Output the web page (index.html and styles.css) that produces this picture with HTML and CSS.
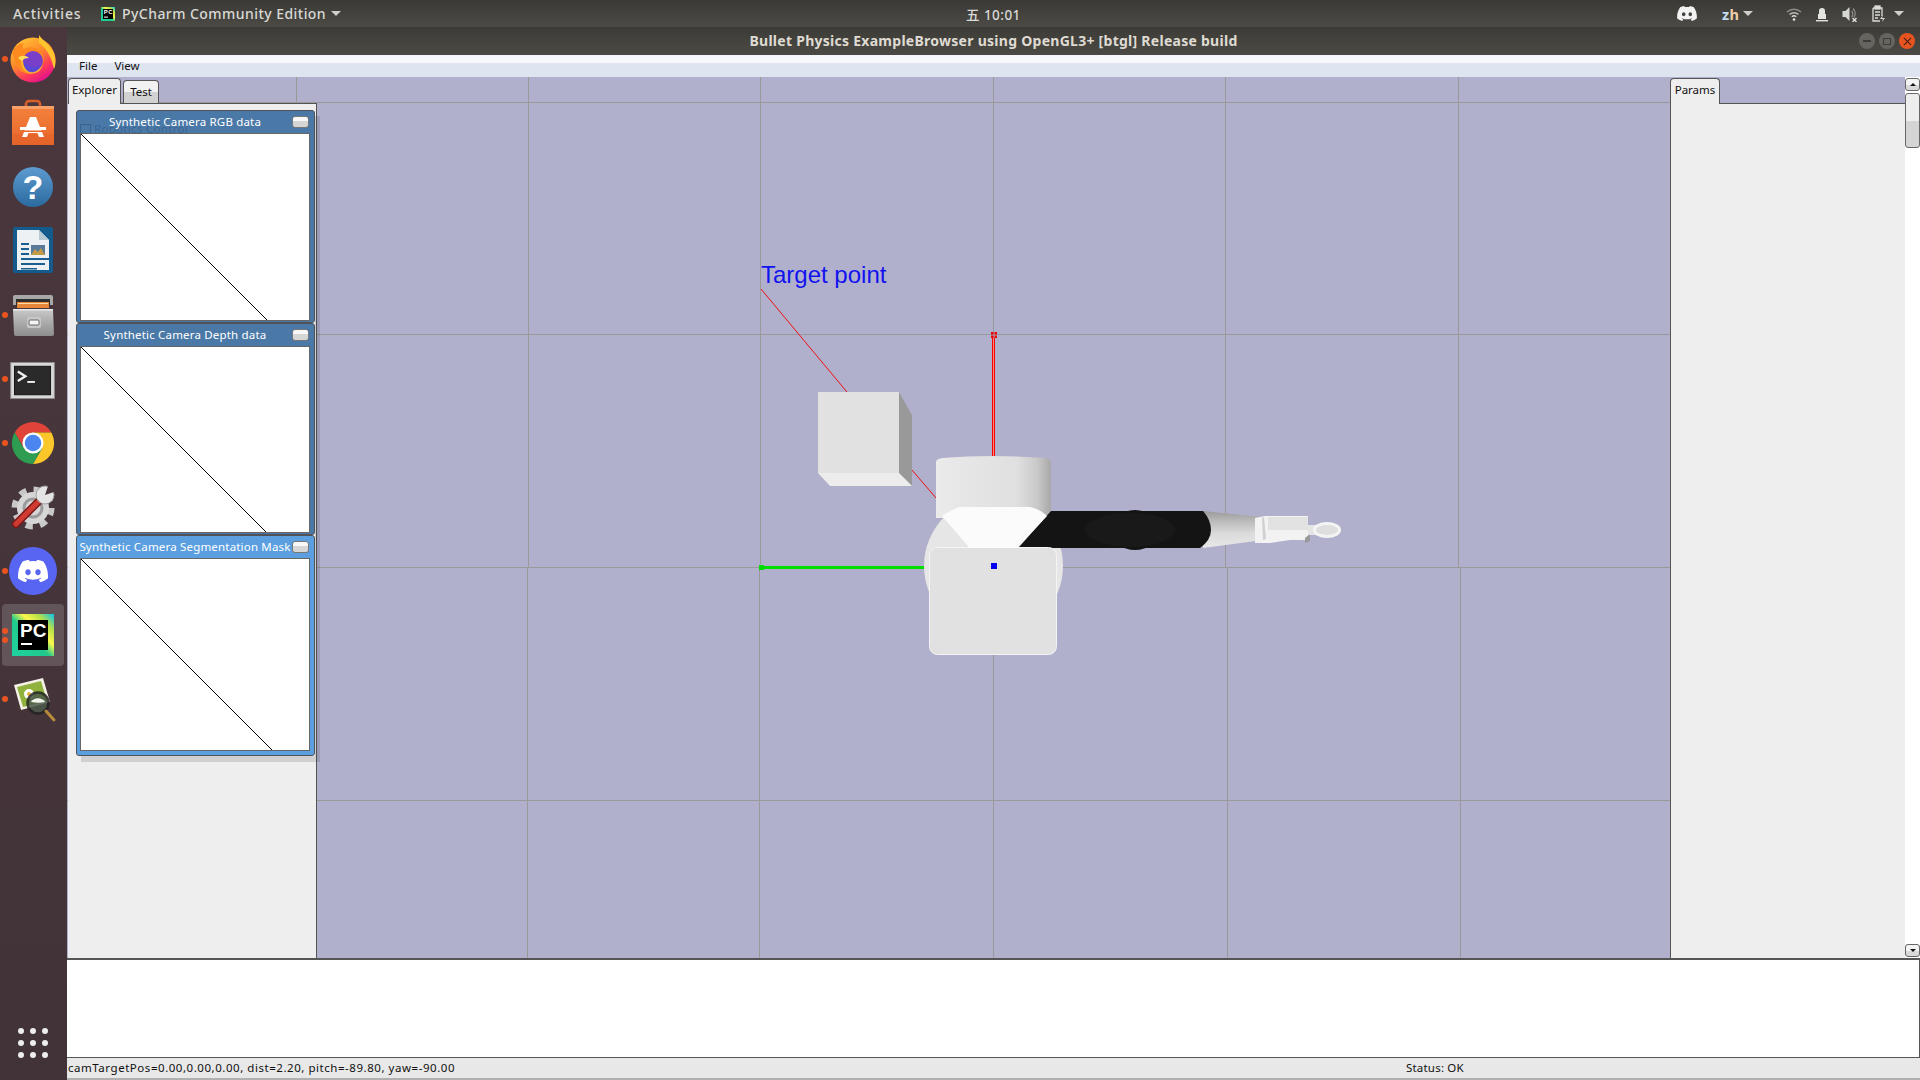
FILE: index.html
```html
<!DOCTYPE html>
<html lang="en">
<head>
<meta charset="utf-8">
<title>Bullet Physics ExampleBrowser</title>
<link rel="stylesheet" href="styles.css">
</head>
<body>
<svg class="defs" width="0" height="0" aria-hidden="true">
  <defs>
    <symbol id="discord" viewBox="0 0 127.14 96.36"><path d="M107.7,8.07A105.15,105.15,0,0,0,81.47,0a72.06,72.06,0,0,0-3.36,6.83A97.68,97.68,0,0,0,49,6.83,72.37,72.37,0,0,0,45.64,0,105.89,105.89,0,0,0,19.39,8.09C2.79,32.65-1.71,56.6.54,80.21h0A105.73,105.73,0,0,0,32.71,96.36,77.7,77.7,0,0,0,39.6,85.25a68.42,68.42,0,0,1-10.85-5.18c.91-.66,1.8-1.34,2.66-2a75.57,75.57,0,0,0,64.32,0c.87.71,1.76,1.39,2.66,2a68.68,68.68,0,0,1-10.87,5.19,77,77,0,0,0,6.89,11.1A105.25,105.25,0,0,0,126.6,80.22h0C129.24,52.84,122.09,29.11,107.7,8.07ZM42.45,65.69C36.18,65.69,31,60,31,53s5-12.74,11.43-12.74S54,46,53.89,53,48.84,65.69,42.45,65.69Zm42.24,0C78.41,65.69,73.25,60,73.25,53s5-12.74,11.44-12.74S96.23,46,96.12,53,91.08,65.69,84.69,65.69Z"/></symbol>
    <linearGradient id="pcg" x1="0" y1="1" x2="1" y2="0"><stop offset="0" stop-color="#1fd2a0"/><stop offset=".45" stop-color="#21c98c"/><stop offset=".62" stop-color="#fcf84a"/><stop offset=".8" stop-color="#b4e04a"/><stop offset="1" stop-color="#07c3f2"/></linearGradient>
    <linearGradient id="ffg" x1="0" y1="0" x2=".6" y2="1"><stop offset="0" stop-color="#ffd43a"/><stop offset=".5" stop-color="#ff8a2a"/><stop offset=".8" stop-color="#ff3a5a"/><stop offset="1" stop-color="#e31587"/></linearGradient>
    <linearGradient id="bag" x1="0" y1="0" x2="0" y2="1"><stop offset="0" stop-color="#f4813c"/><stop offset="1" stop-color="#e9672a"/></linearGradient>
    <linearGradient id="help" x1="0" y1="0" x2="0" y2="1"><stop offset="0" stop-color="#5d9bd0"/><stop offset="1" stop-color="#2b6a9f"/></linearGradient>
    <linearGradient id="cab" x1="0" y1="0" x2="0" y2="1"><stop offset="0" stop-color="#c9c9c9"/><stop offset="1" stop-color="#8d8d8d"/></linearGradient>
    <linearGradient id="drum" x1="0" y1="0" x2="1" y2="0"><stop offset="0" stop-color="#ebebeb"/><stop offset=".25" stop-color="#e6e6e6"/><stop offset=".7" stop-color="#e0e0e0"/><stop offset=".88" stop-color="#c9c9c9"/><stop offset="1" stop-color="#a8a8a8"/></linearGradient>
    <linearGradient id="fore" x1="0" y1="0" x2="0" y2="1"><stop offset="0" stop-color="#9a9a9a"/><stop offset=".3" stop-color="#bdbdbd"/><stop offset=".6" stop-color="#dadada"/><stop offset="1" stop-color="#e8e8e8"/></linearGradient>
  </defs>
</svg>

<header class="topbar">
  <span class="tb-activities">Activities</span>
  <svg class="tb-pc" viewBox="0 0 14 14" width="14" height="14"><rect width="14" height="14" fill="url(#pcg)"/><rect x="2" y="2" width="10" height="10" fill="#000"/><rect x="3" y="9.6" width="4" height="1" fill="#fff"/><text x="2.8" y="7.2" class="tb-pc-t">PC</text></svg>
  <span class="tb-app">PyCharm Community Edition</span>
  <span class="caret caret-app"></span>
  <span class="tb-clock">五 10:01</span>
  <span class="tb-right">
    <svg class="tb-discord" width="20" height="15" fill="#f2f2f2"><use href="#discord"/></svg>
    <span class="tb-lang"><span class="zh-z">z</span><span class="zh-h">h</span></span>
    <span class="caret caret-lang"></span>
    <svg class="tb-ico tb-wifi" viewBox="0 0 16 16" width="16" height="16" fill="none" stroke="#d8d8d4" stroke-width="1.5"><path d="M1 6a10 10 0 0 1 14 0" opacity=".5"/><path d="M3.5 8.5a6.5 6.5 0 0 1 9 0" opacity=".8"/><path d="M5.8 10.8a3.2 3.2 0 0 1 4.4 0"/><circle cx="8" cy="13.5" r="1.3" fill="#e8e8e4" stroke="none"/></svg>
    <svg class="tb-ico tb-lock" viewBox="0 0 14 16" width="14" height="16" fill="#e4e4e0"><path d="M4 8V5a3 3 0 0 1 6 0v3h1v5H3V8z"/><rect x="1" y="14" width="12" height="1.4"/></svg>
    <svg class="tb-ico tb-sound" viewBox="0 0 16 16" width="17" height="16"><path d="M1 5h3l4-4v14l-4-4H1z" fill="#d6d6d2"/><path d="M10 5a4 4 0 0 1 0 6M11.500 2.500a7 7 0 0 1 1 9" fill="none" stroke="#8f8e89" stroke-width="1.300"/><path d="M11 12l4 4M15 12l-4 4" stroke="#e4e4e0" stroke-width="1.300"/></svg>
    <svg class="tb-ico tb-batt" viewBox="0 0 16 18" width="16" height="18" fill="none" stroke="#dcdcd8" stroke-width="1.300"><path d="M3 3h9v8M3 3v13h7"/><rect x="5" y="1" width="5" height="3" fill="#dcdcd8"/><path d="M5 7h5M5 10h5M5 13h3"/><path d="M13 10l-3 4h3l-1 3 3-4h-3z" fill="#dcdcd8" stroke="none"/></svg>
    <span class="caret caret-sys"></span>
  </span>
</header>

<div class="desktop">
  <nav class="dock">
    <div class="dock-item">
      <i class="pip"></i>
      <svg viewBox="0 0 48 48" width="48" height="48"><circle cx="24" cy="25" r="22.500" fill="url(#ffg)"/><path d="M30 0c3 5 11 9 15 18 2 5 2 12 0 16-3-14-9-22-15-26z" fill="#ffc52e"/><path d="M3 17c3-6 8-9 12-9-2 3-1 5 0 6 5-3 12-2 17 3 5 6 3 16-4 20-8 4-17 1-20-6C6 27 5 22 3 17z" fill="#ff8a1f"/><path d="M12 22c3-1 6 0 8 0 5-3 12 0 13 6 1 8-7 12-13 10-7-2-9-9-8-16z" fill="#ffb22e"/><circle cx="24" cy="26" r="10" fill="#7a3fc8"/><path d="M15 26c3 5 10 8 17 4-2 6-7 8-11 7-4-1-7-6-6-11z" fill="#5a47d6"/><path d="M9 23c3-3 8-3 11 0-4 0-6 1-7 3z" fill="#ffdf5a"/></svg>
    </div>
    <div class="dock-item">
      <svg viewBox="0 0 48 48" width="48" height="48"><path d="M17 9V5a3 3 0 0 1 3-3h8a3 3 0 0 1 3 3v4" fill="none" stroke="#d9602a" stroke-width="2.600"/><path d="M3 7h42v39H3z" fill="url(#bag)"/><path d="M3 7h42v3H3z" fill="#f6a06a"/><path d="M3 35h42v11H3z" fill="#e2602a" opacity=".5"/><path d="M21 18h6l8 20h-5l-1.500-4h-9L18 38h-5z" fill="#fff"/><path d="M11 28h26v3H11z" fill="#fff"/><path d="M14 31.500h20v1.500H14z" fill="#e9672a"/></svg>
    </div>
    <div class="dock-item">
      <svg viewBox="0 0 48 48" width="48" height="48"><circle cx="24" cy="24" r="20" fill="url(#help)"/><text x="24" y="36" class="ico-q">?</text></svg>
    </div>
    <div class="dock-item">
      <svg viewBox="0 0 48 48" width="48" height="48"><path d="M6 0h36a2 2 0 0 1 2 2v42a2 2 0 0 1-2 2H6a2 2 0 0 1-2-2V2a2 2 0 0 1 2-2z" fill="#125b8c"/><path d="M8 3h22l10 10v30H8z" fill="#eef1f3"/><path d="M30 3v10h10z" fill="#b9c9d4"/><path d="M12 16h8v2h-8zM12 21h8v2h-8zM12 26h8v2h-8zM12 31h28v2H12zM12 36h24v2H12zM12 41h16v1.500H12z" fill="#1a5f8f"/><rect x="22" y="18" width="14" height="10" fill="#5b7c99"/><path d="M22 28l4-6 3 3 3-4 4 7z" fill="#c39a45"/></svg>
    </div>
    <div class="dock-item">
      <i class="pip"></i>
      <svg viewBox="0 0 48 48" width="48" height="48"><path d="M4 6a2 2 0 0 1 2-2h36a2 2 0 0 1 2 2v8H4z" fill="#a8a8a8"/><path d="M7 8h34v8H7z" fill="#2f2f2f"/><path d="M8 11h32v6H8z" fill="#e8863a"/><path d="M9 12h30v1H9z" fill="#f7d9a8"/><path d="M4 18h40l1 25a2 2 0 0 1-2 2H7a2 2 0 0 1-2-2z" fill="url(#cab)"/><path d="M4 18h40v1.500H4z" fill="#e9e9e9"/><rect x="18" y="26" width="14" height="11" rx="2" fill="#c8c8c8"/><rect x="20" y="29" width="10" height="5" rx="1" fill="#f5f5f5" stroke="#666"/></svg>
    </div>
    <div class="dock-item">
      <i class="pip"></i>
      <svg class="ico-term" viewBox="0 0 48 40" width="46" height="38"><rect x=".5" y=".5" width="46" height="38" fill="#d8d8d8" stroke="#8a8a8a"/><rect x="4.500" y="4.500" width="38" height="30" fill="#2a2a2a" stroke="#111"/><path d="M8 10l8 5-8 5" fill="none" stroke="#f2f2f2" stroke-width="2.400"/><path d="M18 20h8v2h-8z" fill="#f2f2f2"/></svg>
    </div>
    <div class="dock-item">
      <i class="pip"></i>
      <svg viewBox="0 0 48 48" width="46" height="46"><path d="M4.950 13A22 22 0 0 1 43.050 13H24L14.470 29.500z" fill="#e04438"/><path d="M43.050 13A22 22 0 0 1 24 46L33.530 29.500 24 13z" fill="#fbc72a"/><path d="M24 46A22 22 0 0 1 4.950 13L14.470 29.500H33.530z" fill="#2e9d52"/><circle cx="24" cy="24" r="11" fill="#fff"/><circle cx="24" cy="24" r="8.600" fill="#4a85f0"/></svg>
    </div>
    <div class="dock-item">
      <svg viewBox="0 0 48 48" width="48" height="48"><circle cx="24" cy="25" r="18" fill="none" stroke="#c8c8c8" stroke-width="7" stroke-dasharray="7 7.140"/><circle cx="24" cy="25" r="16" fill="#d6d6d6"/><circle cx="24" cy="25" r="9" fill="none" stroke="#9b9b9b" stroke-width="3"/><path d="M7 41L32 16" stroke="#7e1a16" stroke-width="8" stroke-linecap="round"/><path d="M7 41L32 16" stroke="#cf3a33" stroke-width="5" stroke-linecap="round"/><circle cx="36" cy="12" r="9" fill="#e4e4e4" stroke="#a0a0a0"/><path d="M36 12L48 8 40 0z" fill="#47363c"/></svg>
    </div>
    <div class="dock-item">
      <i class="pip"></i>
      <svg viewBox="0 0 48 48" width="48" height="48"><circle cx="24" cy="24" r="24" fill="#5865f2"/><svg x="9" y="12.500" width="30" height="23" fill="#fff"><use href="#discord"/></svg></svg>
    </div>
    <div class="dock-item dock-active">
      <i class="pip pip-a"></i><i class="pip pip-b"></i>
      <svg viewBox="0 0 42 42" width="42" height="42"><rect width="42" height="42" fill="url(#pcg)"/><rect x="6" y="6" width="30" height="30" fill="#000"/><rect x="9" y="29" width="11" height="2" fill="#fff"/><text x="8" y="23" class="ico-pc">PC</text></svg>
    </div>
    <div class="dock-item">
      <i class="pip"></i>
      <svg viewBox="0 0 48 48" width="48" height="48"><path d="M5 10L34 3l7 24-29 8z" fill="#f4f1e6"/><path d="M8 12l24-6 6 20-24 6z" fill="#8fb23c"/><circle cx="20" cy="19" r="5" fill="#fff"/><circle cx="20" cy="19" r="2" fill="#e2b23c"/><circle cx="29" cy="28" r="10.500" fill="#4c5a4c" opacity=".85" stroke="#222" stroke-width="2.500"/><path d="M22 27c3-5 11-5 14 0-4 1-9 1-14 0z" fill="#f4f4ee"/><path d="M37 36l8 9" stroke="#b98a3a" stroke-width="3" stroke-linecap="round"/></svg>
    </div>
    <div class="dock-apps">
      <svg viewBox="0 0 30 30" width="30" height="30" fill="#eeeeee"><circle cx="3" cy="3" r="3"/><circle cx="15" cy="3" r="3"/><circle cx="27" cy="3" r="3"/><circle cx="3" cy="15" r="3"/><circle cx="15" cy="15" r="3"/><circle cx="27" cy="15" r="3"/><circle cx="3" cy="27" r="3"/><circle cx="15" cy="27" r="3"/><circle cx="27" cy="27" r="3"/></svg>
    </div>
  </nav>

  <main class="window">
    <div class="titlebar">
      <span class="title-text">Bullet Physics ExampleBrowser using OpenGL3+ [btgl] Release build</span>
      <span class="wm">
        <span class="wm-btn"><i class="wm-min"></i></span>
        <span class="wm-btn"><i class="wm-max"></i></span>
        <span class="wm-btn wm-close">
          <svg viewBox="0 0 10 10" width="9" height="9" stroke="#4b2012" stroke-width="1.300"><path d="M1 1l8 8M9 1l-8 8"/></svg>
        </span>
      </span>
    </div>
    <div class="menubar"><span class="menu-item">File</span><span class="menu-item">View</span></div>

    <div class="workspace">
      <svg class="scene" viewBox="67 77 1853 881" width="1853" height="881">
        <g class="grid" stroke="#999999" stroke-width="1" shape-rendering="crispEdges">
          <path d="M296.500 77V958M528.500 77V567M527.500 567V958M760.500 77V567M759.500 567V958M993.500 77V958M1225.500 77V567M1227.500 567V958M1458.500 77V567M1460.500 567V958"/>
          <path d="M67 102.500H1670M67 334.500H1670M67 567.500H1670M67 800.500H1670"/>
        </g>
        <text x="761" y="283" class="target-label">Target point</text>
        <path d="M761 289L847 392M912 470L936 498" stroke="#ee1010" stroke-width="1" fill="none"/>
        <path d="M818 392h81v81h-81z" fill="#e1e1e1"/>
        <path d="M899 392l13 23v71l-13-13z" fill="#999999"/>
        <path d="M818 473h81l13 13h-82z" fill="#ececec"/>
        <path d="M993 338v118" stroke="#e88a8a" stroke-width="1" shape-rendering="crispEdges"/>
        <path d="M992.500 338v118M994.500 338v118" stroke="#ff0000" stroke-width="1" shape-rendering="crispEdges"/>
        <path d="M991 332h2.500v2.500h-2.500zM994.500 332h2.500v2.500h-2.500zM991 335.500h2.500v2.500h-2.500zM994.500 335.500h2.500v2.500h-2.500z" fill="#ee0000"/>
        <path d="M760 567h170" stroke="#00e000" stroke-width="3" shape-rendering="crispEdges"/>
        <rect x="759" y="565" width="5" height="5" fill="#00d800"/>
        <circle cx="993.500" cy="566" r="69.500" fill="#e6e6e6"/>
        <path d="M936 462q0-3 6-4 50-4 104 0 5 1 5 4v56h-115z" fill="url(#drum)"/>
        <path d="M1203 511l58 6q3 12 2 23l-60 8z" fill="url(#fore)"/>
        <path d="M1019 547L1051 511H1203Q1211 520 1211 530T1200 548H1019Z" fill="#141414"/>
        <ellipse cx="1135" cy="530" rx="24" ry="20" fill="#141414"/>
        <ellipse cx="1130" cy="530" rx="45" ry="17" fill="#191919"/>
        <path d="M942 516Q950 510 960 507H1030Q1040 509 1047 516L1019 546H968Z" fill="#fbfbfb"/>
        <rect x="929.500" y="547.500" width="127" height="107" rx="8" fill="#e1e1e1" stroke="#f4f4f4"/>
        <path d="M968 544h51v4h-51z" fill="#fbfbfb"/>
        <rect x="991" y="563" width="6" height="6" fill="#0000ee"/>
        <path d="M1255 518l10-2h43v24h-18l-20 3h-15z" fill="#f2f2f2"/>
        <path d="M1262 518l2-1 2 22-3 1z" fill="#d0d0d0"/>
        <path d="M1268 517h40v13h-40z" fill="#e2e2e2"/>
        <path d="M1305 538l5-4v7l-5 2z" fill="#999"/>
        <path d="M1308 525h10v10h-10z" fill="#e4e4e4"/>
        <ellipse cx="1327" cy="530" rx="14" ry="8" fill="#f4f4f4"/>
        <ellipse cx="1327" cy="530" rx="11" ry="5" fill="#dedede"/>
      </svg>

      <div class="docks">
        <section class="left-dock">
          <div class="tabs">
            <span class="tab tab-on">Explorer</span>
            <span class="tab tab-off">Test</span>
          </div>
          <div class="panel"></div>
          <div class="floats">
            <article class="pane pane-first">
              <header class="pane-head">
                <span class="ghost">Robotics Control</span>
                <span class="pane-title">Synthetic Camera RGB data</span>
                <span class="pane-min"></span>
              </header>
              <div class="pane-body"><svg class="diag" shape-rendering="crispEdges"><path d="M0 0L240 240" stroke="#000"/></svg></div>
            </article>
            <article class="pane">
              <header class="pane-head">
                <span class="pane-title">Synthetic Camera Depth data</span>
                <span class="pane-min"></span>
              </header>
              <div class="pane-body"><svg class="diag" shape-rendering="crispEdges"><path d="M0 0L240 240" stroke="#000"/></svg></div>
            </article>
            <article class="pane pane-active">
              <header class="pane-head">
                <span class="pane-title">Synthetic Camera Segmentation Mask</span>
                <span class="pane-min"></span>
              </header>
              <div class="pane-body"><svg class="diag" shape-rendering="crispEdges"><path d="M0 0L240 240" stroke="#000"/></svg></div>
            </article>
          </div>
        </section>

        <section class="right-dock">
          <div class="tabs tabs-right"><span class="tab tab-on tab-params">Params</span></div>
          <div class="panel panel-right"></div>
        </section>
        <aside class="scrollbar">
          <span class="sb-btn"><i class="arrow-up"></i></span>
          <span class="sb-thumb"></span>
          <span class="sb-btn sb-btn-end"><i class="arrow-down"></i></span>
        </aside>
      </div>
    </div>

    <div class="console"></div>
    <footer class="status">
      <span class="status-left">camTargetPos=0.00,0.00,0.00, dist=2.20, pitch=-89.80, yaw=-90.00</span>
      <span class="status-right">Status: OK</span>
    </footer>
  </main>
</div>
</body>
</html>
```
FILE: styles.css
```css
* { box-sizing: border-box; }
html, body { margin: 0; height: 100%; overflow: hidden; }
body { width: 1920px; height: 1080px; font-family: "Noto Sans", sans-serif; background: #3c3b37; display: flex; flex-direction: column; }
.defs { position: absolute; }

/* top bar */
.topbar { height: 27px; flex: none; display: flex; align-items: center; padding-left: 13px; background: linear-gradient(#3a3935, #4c4a45); color: #d9d9d5; font-size: 14px; font-weight: 500; letter-spacing: .45px; position: relative; }
.tb-activities { width: 88px; letter-spacing: .8px; }
.tb-pc { flex: none; }
.tb-pc-t { font: 700 6px "Liberation Sans", sans-serif; fill: #fff; }
.tb-app { margin-left: 7px; width: 209px; white-space: nowrap; }
.caret { display: block; width: 0; height: 0; border-left: 5px solid transparent; border-right: 5px solid transparent; border-top: 5px solid #cfcfcb; }
.tb-clock { margin-left: 625px; width: 60px; white-space: nowrap; font-family: "Noto Sans", "Noto Sans CJK SC", sans-serif; font-size: 13.500px; }
.tb-right { margin-left: 651px; display: flex; align-items: center; }
.tb-discord { flex: none; }
.tb-lang { margin-left: 25px; font-weight: 700; font-size: 14.500px; width: 21px; }
.zh-z { color: #c4dcf0; }
.zh-h { color: #f0cfa8; }
.tb-wifi { margin-left: 33px; }
.tb-lock { margin-left: 13px; }
.tb-sound { margin-left: 12px; }
.tb-batt { margin-left: 12px; }
.caret-sys { margin-left: 8px; }

.desktop { flex: 1; display: flex; min-height: 0; }

/* dock */
.dock { width: 67px; flex: none; background: linear-gradient(#4a373d, #413338); display: flex; flex-direction: column; align-items: stretch; }
.dock-item { height: 64px; flex: none; display: flex; align-items: center; justify-content: center; position: relative; padding-right: 1px; }
.dock-active::before { content: ""; position: absolute; left: 2px; top: 1px; width: 62px; height: 62px; border-radius: 4px; background: rgba(255,255,255,.16); }
.dock-active svg { position: relative; }
.ico-term { margin-top: 4px; }
.pip { position: absolute; left: 2px; top: 29px; width: 6px; height: 6px; border-radius: 50%; background: #e95420; }
.pip-a { top: 25px; }
.pip-b { top: 34px; }
.dock-apps { margin-top: auto; height: 58px; display: flex; justify-content: center; padding: 6px 1px 0 0; }
.ico-q { font: 700 34px "Liberation Sans", sans-serif; fill: #fff; text-anchor: middle; }
.ico-pc { font: 700 19px "Liberation Sans", sans-serif; fill: #fff; }

/* window */
.window { flex: 1; min-width: 0; display: flex; flex-direction: column; background: #fff; }
.titlebar { height: 28px; flex: none; background: linear-gradient(#3c3b37, #4b4a44); color: #dfdbd2; font-size: 14px; font-weight: 700; display: flex; align-items: center; justify-content: center; position: relative; letter-spacing: .27px; padding-bottom: 2px; }
.wm { position: absolute; right: 5px; top: 6px; display: flex; gap: 4px; }
.wm-btn { width: 16px; height: 16px; border-radius: 50%; background: #65645f; display: flex; align-items: center; justify-content: center; }
.wm-min { width: 8px; height: 2px; background: #3c3b37; }
.wm-max { width: 8px; height: 7px; border: 1px solid #3c3b37; }
.wm-close { background: #e8541f; }
.menubar { height: 22px; flex: none; display: flex; padding: 0 0 2px 12px; gap: 17px; align-items: center; font: 11.500px "Noto Sans", sans-serif; color: #111; background: linear-gradient(#f6f8fc 0 8px, #dfe4f1 8px); }

.workspace { height: 881px; flex: none; position: relative; background: #b0b0cc; }
.scene { position: absolute; left: 0; top: 0; display: block; }
.target-label { font: 24px "Liberation Sans", sans-serif; fill: #1212f0; }
.docks { position: absolute; inset: 0; display: flex; align-items: stretch; }

.left-dock { width: 250px; flex: none; display: flex; flex-direction: column; position: relative; padding-left: 1px; }
.right-dock { margin-left: auto; width: 235px; flex: none; display: flex; flex-direction: column; }
.tabs { height: 26px; flex: none; display: flex; align-items: flex-end; gap: 1px; font: 11.500px "Noto Sans", sans-serif; color: #111; }
.tab { display: flex; align-items: center; justify-content: center; border: 1px solid #555; border-bottom: 0; border-radius: 4px 4px 0 0; }
.tab-on { height: 26px; width: 53px; background: #eeeeee; padding-bottom: 5px; position: relative; z-index: 1; margin-bottom: -1px; }
.tab-off { height: 23px; width: 36px; margin-left: 1px; padding-bottom: 2px; background: linear-gradient(#f2f2f2 0 50%, #d2d2d2 50%); }
.tab-params { width: 50px; }
.panel { flex: 1; background: #eeeeee; border-top: 1px solid #555; border-right: 1px solid #555; }
.panel-right { border-right: 0; border-left: 1px solid #555; }

.floats { position: absolute; left: 9px; top: 33px; width: 239px; display: flex; flex-direction: column; box-shadow: 5px 6px 0 rgba(40,40,60,.15); }
.pane { border: 1px solid #4f5358; border-radius: 3px; background: #4a79a8; height: 212px; padding: 0 4px 1px 3px; display: flex; flex-direction: column; }
.pane-first { height: 213px; }
.pane-active { background: #5c9fe0; height: 221px; padding-bottom: 4px; }
.pane-head { height: 22px; flex: none; display: flex; align-items: center; justify-content: center; position: relative; color: #fff; font: 11.500px "Noto Sans", sans-serif; margin: 0 -4px 0 -3px; padding: 0 21px 1px 0; }
.pane-title { white-space: nowrap; position: relative; letter-spacing: .18px; }
.ghost { position: absolute; left: 17px; top: 10px; line-height: 16px; color: rgba(20,40,80,.28); font-size: 11.500px; letter-spacing: .3px; white-space: nowrap; }
.ghost::before { content: ""; position: absolute; left: -14px; top: 3px; width: 9px; height: 9px; border: 1px solid rgba(20,40,80,.28); }
.pane-min { position: absolute; right: 5px; top: 5px; width: 17px; height: 12px; border: 1px solid #777; border-radius: 3px; background: linear-gradient(#f8f8f8 0 40%, #d6d6d6 40%); }
.pane-body { flex: 1; background: #fff; border: 1px solid #666; overflow: hidden; position: relative; }
.diag { width: 100%; height: 100%; display: block; }

/* scrollbar */
.scrollbar { width: 15px; flex: none; background: #fff; display: flex; flex-direction: column; gap: 2px; }
.sb-btn { margin-top: 1px; height: 13px; border: 1px solid #666; border-radius: 3px; background: linear-gradient(#f4f4f4 0 55%, #d8d8d8 55%); display: flex; align-items: center; justify-content: center; flex: none; }
.sb-thumb { height: 55px; flex: none; border: 1px solid #666; border-radius: 3px; background: linear-gradient(#eeeeee 0 50%, #d4d4d4 50%); }
.sb-btn-end { margin-top: auto; margin-bottom: 1px; }
.arrow-up { width: 0; height: 0; border-left: 3px solid transparent; border-right: 3px solid transparent; border-bottom: 3px solid #111; }
.arrow-down { width: 0; height: 0; border-left: 3px solid transparent; border-right: 3px solid transparent; border-top: 3px solid #111; }

/* bottom */
.console { height: 100px; flex: none; background: #fff; border-top: 2px solid #555; border-bottom: 1px solid #555; border-right: 1px solid #555; }
.status { height: 22px; flex: none; background: #e8e8e8; border-bottom: 2px solid #b0b0b0; display: flex; align-items: center; padding: 0 0 2px 1px; font: 11.500px "Noto Sans", sans-serif; color: #111; }
.status-left { width: 1338px; white-space: nowrap; letter-spacing: .54px; }
.status-right { letter-spacing: .2px; }
```
